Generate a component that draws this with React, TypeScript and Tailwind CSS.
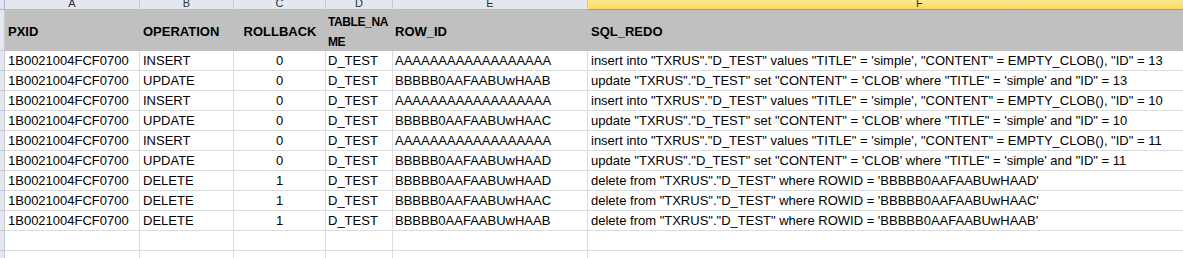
const rows = [
  ["1B0021004FCF0700", "INSERT", "0", "D_TEST", "AAAAAAAAAAAAAAAAAA", `insert into "TXRUS"."D_TEST" values "TITLE" = 'simple', "CONTENT" = EMPTY_CLOB(), "ID" = 13`],
  ["1B0021004FCF0700", "UPDATE", "0", "D_TEST", "BBBBB0AAFAABUwHAAB", `update "TXRUS"."D_TEST" set "CONTENT" = 'CLOB' where "TITLE" = 'simple' and "ID" = 13`],
  ["1B0021004FCF0700", "INSERT", "0", "D_TEST", "AAAAAAAAAAAAAAAAAA", `insert into "TXRUS"."D_TEST" values "TITLE" = 'simple', "CONTENT" = EMPTY_CLOB(), "ID" = 10`],
  ["1B0021004FCF0700", "UPDATE", "0", "D_TEST", "BBBBB0AAFAABUwHAAC", `update "TXRUS"."D_TEST" set "CONTENT" = 'CLOB' where "TITLE" = 'simple' and "ID" = 10`],
  ["1B0021004FCF0700", "INSERT", "0", "D_TEST", "AAAAAAAAAAAAAAAAAA", `insert into "TXRUS"."D_TEST" values "TITLE" = 'simple', "CONTENT" = EMPTY_CLOB(), "ID" = 11`],
  ["1B0021004FCF0700", "UPDATE", "0", "D_TEST", "BBBBB0AAFAABUwHAAD", `update "TXRUS"."D_TEST" set "CONTENT" = 'CLOB' where "TITLE" = 'simple' and "ID" = 11`],
  ["1B0021004FCF0700", "DELETE", "1", "D_TEST", "BBBBB0AAFAABUwHAAD", `delete from "TXRUS"."D_TEST" where ROWID = 'BBBBB0AAFAABUwHAAD'`],
  ["1B0021004FCF0700", "DELETE", "1", "D_TEST", "BBBBB0AAFAABUwHAAC", `delete from "TXRUS"."D_TEST" where ROWID = 'BBBBB0AAFAABUwHAAC'`],
  ["1B0021004FCF0700", "DELETE", "1", "D_TEST", "BBBBB0AAFAABUwHAAB", `delete from "TXRUS"."D_TEST" where ROWID = 'BBBBB0AAFAABUwHAAB'`],
  ["", "", "", "", "", ""],
  ["", "", "", "", "", ""],
];

const cols = "grid grid-cols-[5px_135px_94px_92px_67px_195px_1fr]";
const letters = ["A", "B", "C", "D", "E"];

export default function App() {
  return (
    <div className="w-[1183px] h-[258px] overflow-hidden bg-white font-['Liberation_Sans',sans-serif] text-[13px] text-black">
      {/* column letters */}
      <div className={`${cols} grid-rows-[10px]`}>
        <div className="bg-[#e4e8ee] border-r border-b border-[#9eb6ce]" />
        {letters.map((l) => (
          <div
            key={l}
            className="flex items-end justify-center bg-[#e4e8ee] border-r border-b border-r-[#c5ccd6] border-b-[#b8bcc2] text-[11px] leading-none text-[#27313d] overflow-hidden"
          >
            {l}
          </div>
        ))}
        <div className="flex items-end bg-gradient-to-b from-[#fce98e] to-[#fbd966] border-b border-[#d2922e] text-[11px] leading-none text-[#27313d] overflow-hidden pl-[328px]">
          F
        </div>
      </div>

      {/* header row */}
      <div className={`${cols} grid-rows-[41px] font-bold`}>
        <div className="bg-[#e4e8ee] border-r border-b border-[#c5ccd6]" />
        <div className="bg-[#c0c0c0] flex items-center pl-[3px] pt-[2px]">PXID</div>
        <div className="bg-[#c0c0c0] flex items-center pl-[3px] pt-[2px]">OPERATION</div>
        <div className="bg-[#c0c0c0] flex items-center justify-center pt-[2px]">ROLLBACK</div>
        <div className="bg-[#c0c0c0] flex flex-col justify-center pl-[2px] pt-[2px] leading-[20px] text-[12px] tracking-[-0.4px] whitespace-nowrap overflow-hidden">
          <span>TABLE_NA</span>
          <span>ME</span>
        </div>
        <div className="bg-[#c0c0c0] flex items-center pl-[2px] pt-[2px]">ROW_ID</div>
        <div className="bg-[#c0c0c0] flex items-center pl-[3px] pt-[2px]">SQL_REDO</div>
      </div>

      {/* data rows */}
      {rows.map((r, i) => (
        <div key={i} className={`${cols} grid-rows-[20px]`}>
          <div className="bg-[#e4e8ee] border-r border-b border-[#c5ccd6]" />
          {r.map((c, j) => (
            <div
              key={j}
              className={`flex items-end pb-[3px] leading-none whitespace-nowrap overflow-hidden border-b border-[#dadcdd] ${
                j < 5 ? "border-r" : ""
              } ${j === 2 ? "justify-center" : j === 3 || j === 4 ? "pl-[2px]" : "pl-[3px]"}`}
            >
              {c}
            </div>
          ))}
        </div>
      ))}
    </div>
  );
}
